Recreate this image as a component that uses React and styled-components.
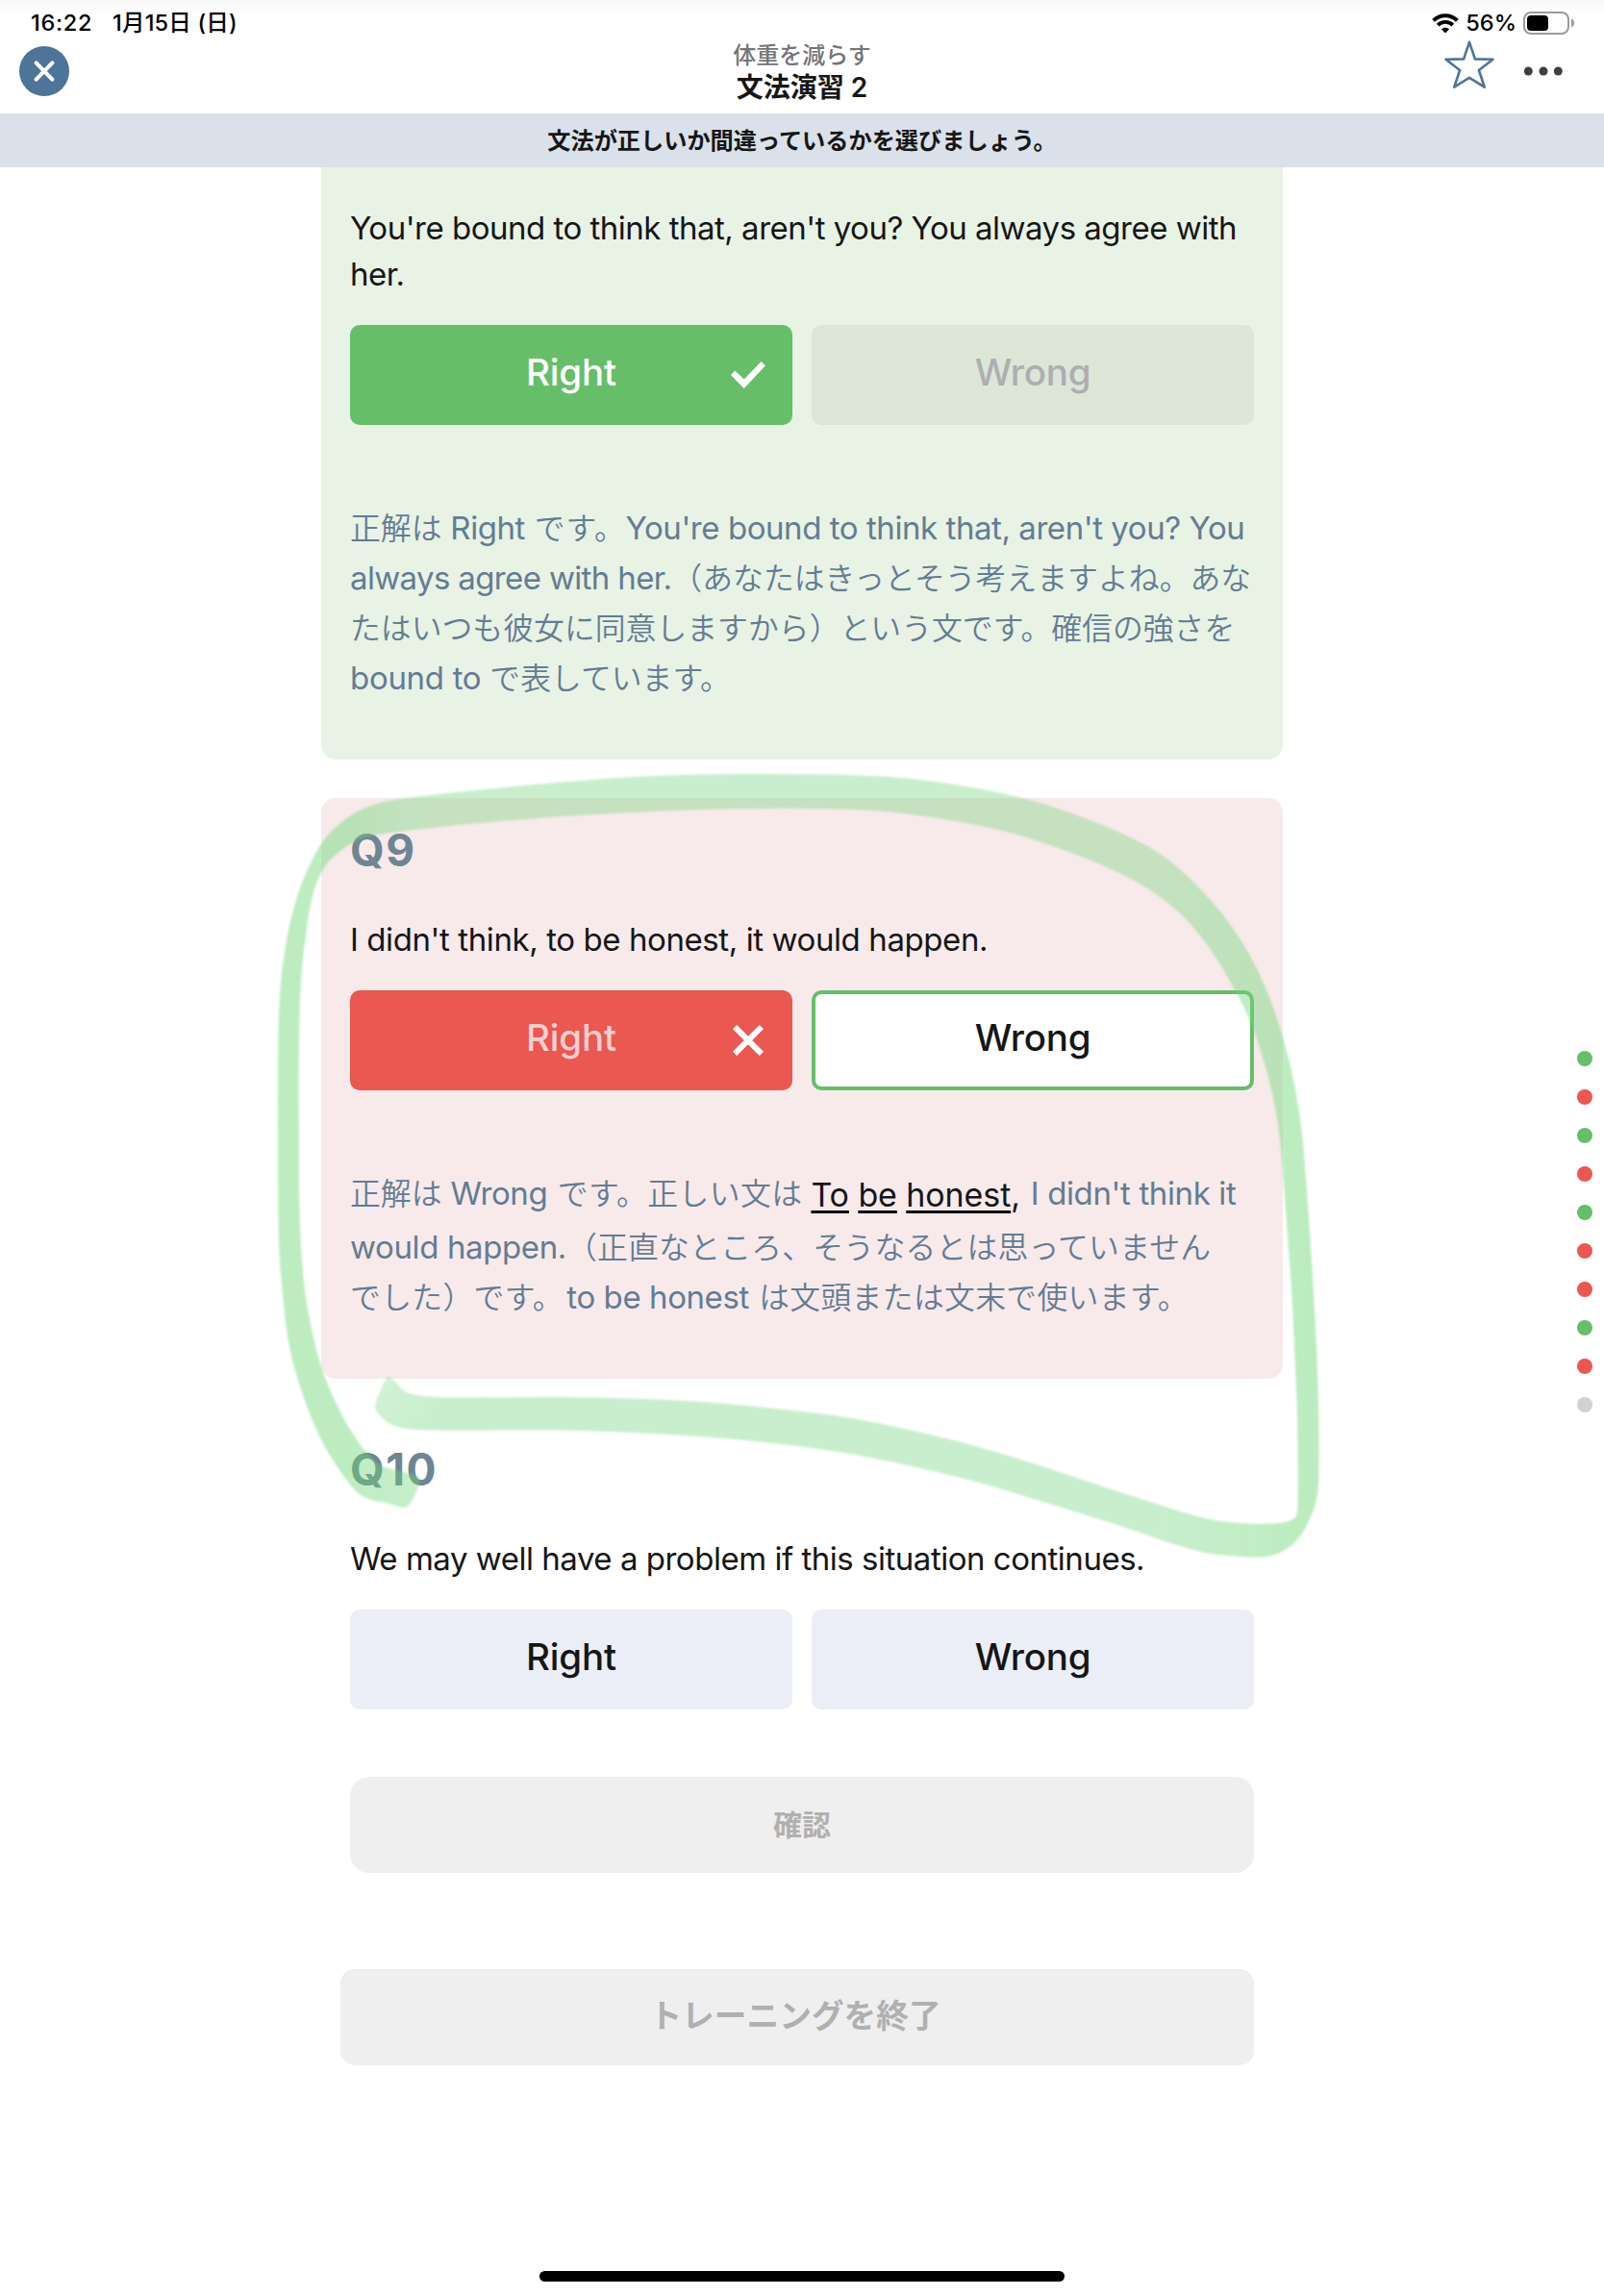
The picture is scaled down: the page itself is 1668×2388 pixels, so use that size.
import React from 'react';
import styled, { createGlobalStyle } from 'styled-components';

const GlobalStyle = createGlobalStyle`
  *, *::before, *::after { box-sizing: border-box; }
  html, body { margin: 0; padding: 0; background: #fff; }
  body { font-family: Inter, 'Noto Sans CJK JP', sans-serif; color: #161616; }
  button { font: inherit; border: 0; padding: 0; margin: 0; }
`;

const Screen = styled.div`
  position: relative;
  display: flex;
  flex-direction: column;
  width: 1668px;
  height: 2388px;
  overflow: hidden;
  background: #fff;
`;

const Header = styled.header`
  height: 118px;
  flex: none;
  background: linear-gradient(#f8f8f8, #fdfdfd 10px, #fff 17px);
`;

const StatusBar = styled.div`
  display: flex;
  align-items: center;
  height: 42px;
  padding: 6px 30px 0 32px;
  font-size: 23.5px;
  font-weight: 500;
  line-height: 30px;
  color: #000;
`;

const Time = styled.span`
  width: 85px;
  letter-spacing: 0.7px;
`;

const DateLabel = styled.span`
  flex: 1;
  letter-spacing: 0.2px;
`;

const StatusIcons = styled.div`
  display: flex;
  align-items: center;
  gap: 7px;
`;

const NavBar = styled.div`
  display: grid;
  grid-template-columns: 1fr auto 1fr;
  height: 76px;
  padding: 0 42px 0 20px;
`;

const CloseButton = styled.button`
  display: flex;
  align-items: center;
  justify-content: center;
  width: 52px;
  height: 52px;
  margin-top: 6px;
  border-radius: 50%;
  background: #4d7499;
`;

const Titles = styled.div`
  display: flex;
  flex-direction: column;
  align-items: center;
  padding: 1px 0 0 22px;
`;

const Subtitle = styled.div`
  height: 30px;
  line-height: 30px;
  font-size: 24px;
  font-weight: 500;
  color: #757578;
`;

const Title = styled.div`
  height: 36px;
  line-height: 37px;
  font-size: 28px;
  font-weight: 600;
`;

const NavActions = styled.div`
  display: flex;
  justify-content: flex-end;
  align-items: flex-start;
  gap: 29px;
`;

const Banner = styled.div`
  flex: none;
  height: 56px;
  padding-top: 1px;
  line-height: 56px;
  text-align: center;
  font-size: 24.2px;
  font-weight: 600;
  background: #dae1ea;
`;

const Content = styled.main`
  display: flex;
  flex-direction: column;
  width: 1000px;
  margin: 0 auto;
  gap: 40px;
`;

const cardColors = { correct: '#e8f3e5', incorrect: '#f8eaeb', open: 'transparent' };

const Card = styled.section`
  padding: ${(p) => (p.$clipped ? '39px' : '26px')} 30px ${(p) => (p.$state === 'open' ? '0' : '59px')};
  border-radius: ${(p) => (p.$clipped ? '0 0 15px 15px' : '15px')};
  background: ${(p) => cardColors[p.$state]};
`;

const Number = styled.h2`
  margin: 0 0 41px;
  height: 56px;
  line-height: 56px;
  font-size: 46px;
  font-weight: 700;
  letter-spacing: 1.5px;
  color: #6f8594;
`;

const Line = styled.div`
  white-space: nowrap;
  letter-spacing: ${(p) => p.$track || 0}px;
`;

const Question = styled.div`
  font-size: 33px;
  line-height: 48px;
`;

const Answers = styled.div`
  display: grid;
  grid-template-columns: 1fr 1fr;
  gap: 20px;
  margin-top: 29px;
`;

const answerStyles = {
  right: { bg: '#67be69', fg: '#ffffff' },
  muted: { bg: '#dce6d6', fg: '#aeaeb2' },
  miss: { bg: '#eb5751', fg: '#f3cfcd' },
  reveal: { bg: '#ffffff', fg: '#161616', ring: '#67be69' },
  idle: { bg: '#ebeef6', fg: '#161616' },
};

const Answer = styled.button`
  display: grid;
  grid-template-columns: 64px 1fr 64px;
  align-items: center;
  height: 104px;
  border-radius: 10px;
  background: ${(p) => answerStyles[p.$kind].bg};
  color: ${(p) => answerStyles[p.$kind].fg};
  box-shadow: ${(p) => (answerStyles[p.$kind].ring ? `inset 0 0 0 4px ${answerStyles[p.$kind].ring}` : 'none')};
  font-size: 38.5px;
  font-weight: 500;
  line-height: 50px;
`;

const AnswerLabel = styled.span`
  grid-column: 2;
  padding-bottom: 6px;
  text-align: center;
  letter-spacing: -0.2px;
`;

const Explanation = styled.div`
  margin-top: 81px;
  font-size: 33px;
  line-height: 52px;
  color: #647c92;
`;

const Ja = styled.span`
  margin-left: ${(p) => p.$gap || 0}px;
  margin-right: ${(p) => p.$after || 0}px;
  font-family: 'Noto Sans CJK JP DemiLight', 'Noto Sans CJK JP', sans-serif;
  font-size: 31.85px;
  font-weight: 350;
  line-height: 1;
  letter-spacing: ${(p) => p.$track || 0}px;
`;

const LeadLine = styled(Line)`
  height: 52px;
  margin-bottom: 4px;
`;

const Fix = styled.span`
  display: inline-block;
  height: 48px;
  margin-right: 2px;
  line-height: 48px;
  vertical-align: -2px;
  font-size: 34px;
  letter-spacing: -0.1px;
  color: #161616;
`;

const Word = styled.u`
  text-decoration-color: #000;
  text-decoration-thickness: 3px;
  text-underline-offset: 3.5px;
  text-decoration-skip-ink: none;
`;

const WideButton = styled.button`
  flex: none;
  height: 100px;
  margin: ${(p) => p.$margin};
  padding: 0 ${(p) => p.$shift || 0}px ${(p) => p.$lift || 0}px 0;
  border-radius: ${(p) => p.$radius}px;
  background: #efefef;
  color: #b0b0b0;
  font-size: ${(p) => p.$size}px;
  font-weight: 600;
`;

const HomeIndicator = styled.div`
  flex: none;
  width: 546px;
  height: 11px;
  margin: auto auto 15px;
  border-radius: 5.5px;
  background: #000;
`;

const ProgressRail = styled.div`
  position: absolute;
  top: 1093px;
  right: 12px;
  display: flex;
  flex-direction: column;
  gap: 24px;
`;

const dotColors = { ok: '#67be69', ng: '#eb5751', none: '#d1d1d1' };

const Dot = styled.span`
  width: 16px;
  height: 16px;
  border-radius: 50%;
  background: ${(p) => dotColors[p.$state]};
`;

const MarkerLayer = styled.svg`
  position: absolute;
  inset: 0;
  pointer-events: none;
`;

const WifiIcon = () => (
  <svg width="28" height="21" viewBox="0 0 28 21" fill="none">
    <path d="M1.6 7.4C8.5 0.6 19.5 0.6 26.4 7.4" stroke="#000" strokeWidth="4" />
    <path d="M6.2 12.1C10.6 7.9 17.4 7.9 21.8 12.1" stroke="#000" strokeWidth="3.8" />
    <path d="M14 20.4L9.9 16.2C12.2 14.1 15.8 14.1 18.1 16.2Z" fill="#000" />
  </svg>
);

const BatteryIcon = () => (
  <svg width="54" height="24" viewBox="0 0 54 24">
    <rect x="1" y="1" width="46" height="22" rx="7" fill="none" stroke="#9b9b9b" strokeWidth="2" />
    <rect x="4" y="4" width="22" height="16" rx="4" fill="#000" />
    <path d="M50 7.5C52 8.3 53 10 53 12S52 15.7 50 16.5Z" fill="#9b9b9b" />
  </svg>
);

const CloseIcon = () => (
  <svg width="24" height="24" viewBox="0 0 24 24">
    <path d="M3.6 3.4L20.4 20.6M20.4 3.4L3.6 20.6" stroke="#fff" strokeWidth="4.2" strokeLinecap="round" />
  </svg>
);

const StarIcon = () => (
  <svg width="54" height="52" viewBox="0 0 54 52">
    <path
      d="M27 1.8L32.9 19.4L51.5 19.8L36.9 31L42.8 48.6L27 38.8L11.2 48.6L17.1 31L2.5 19.8L21.1 19.4Z"
      fill="none"
      stroke="#4d7499"
      strokeWidth="2.6"
      strokeLinejoin="round"
    />
  </svg>
);

const MoreIcon = () => (
  <svg width="42" height="68" viewBox="0 0 42 68">
    {[5.3, 21, 36.3].map((x) => (
      <circle key={x} cx={x} cy="32" r="4.5" fill="#3f3f40" />
    ))}
  </svg>
);

const CheckIcon = () => (
  <svg width="36" height="28" viewBox="0 0 36 28">
    <path d="M0 14L4.4 9.6L13.7 18.4L31.6 0L36 4.3L13.7 28Z" fill="#fff" />
  </svg>
);

const CrossIcon = () => (
  <svg width="36" height="32" viewBox="0 0 36 32">
    <path d="M6.2 4.2L29.8 27.8M29.8 4.2L6.2 27.8" stroke="#fff" strokeWidth="6" strokeLinecap="square" />
  </svg>
);

// Outline of the hand-drawn highlighter loop, walked once around both edges.
const loop = [
  [405, 1432], [412, 1438], [421, 1447], [433.6, 1451], [458.6, 1453.3], [601, 1453.3], [726, 1457.7], [840, 1468.7],
  [890, 1475.7], [968, 1492.3], [1038, 1510.7], [1116, 1535.7], [1190, 1560], [1238, 1575], [1267.7, 1582], [1301, 1584.7],
  [1330.5, 1584], [1346, 1579], [1349.4, 1568], [1349, 1473], [1347, 1423], [1343.5, 1350], [1338, 1273], [1334.2, 1223],
  [1331.5, 1190], [1325, 1146.7], [1314, 1103], [1301, 1065], [1287, 1035], [1267, 1000], [1249, 974.5], [1227, 950],
  [1201, 929], [1173.3, 912.7], [1134.5, 895], [1086.4, 877.3], [1038, 863], [968, 850], [912, 843.3], [857, 841.3],
  [820, 840.7], [744, 841.7], [637, 846], [530, 853.3], [423, 864], [383.6, 870], [365.7, 877.3], [347.9, 890],
  [335.4, 905], [324.6, 933.3], [317.5, 976.7], [312.9, 1023], [311, 1090], [311, 1190], [311.5, 1256], [315, 1323],
  [321, 1366.7], [333.6, 1420], [351.4, 1463.3], [369.3, 1495], [383.6, 1513], [396, 1524], [415.7, 1530], [434, 1535],
  [437, 1538], [433.6, 1550], [427, 1563], [421, 1568], [405, 1564], [383, 1559], [369.3, 1550], [351.4, 1526.7],
  [333.6, 1496.7], [315.7, 1453.3], [301.4, 1403], [293.6, 1343], [290, 1290], [289, 1190], [289, 1123], [290, 1056.7],
  [293.6, 1006.7], [303.2, 953.3], [315.7, 914], [333.6, 878.3], [351.4, 858.3], [372.9, 843.3], [398, 834.5], [430, 829],
  [494, 822], [583.6, 813.5], [673, 807.3], [762, 805], [840, 805.3], [912, 807.3], [975, 813.3], [1049, 826.5],
  [1116, 846.5], [1182, 874], [1221, 899], [1264, 942], [1293.6, 983.3], [1315.7, 1026.7], [1332.4, 1073], [1345, 1123],
  [1353.5, 1175], [1358.3, 1230], [1362, 1280], [1365.7, 1340], [1369.4, 1406.7], [1371.3, 1473], [1371.3, 1536.7], [1369, 1560],
  [1362, 1580], [1352.7, 1596.7], [1339.8, 1610], [1319.5, 1618.5], [1289.8, 1619], [1256.5, 1615.5], [1223, 1606.7], [1153, 1583.3],
  [1079, 1560.3], [1027, 1544.5], [968, 1529.5], [894, 1514], [820, 1503], [726, 1494], [601, 1488], [458.6, 1487.7],
  [423, 1486], [405, 1480.7], [396, 1473.3], [390, 1463], [395, 1448], [402, 1433],
];

const smoothPath = (pts) => {
  const n = pts.length;
  const at = (i) => pts[(i + n) % n];
  let d = `M${pts[0].join(' ')}`;
  for (let i = 0; i < n; i += 1) {
    const [a, b, c, e] = [at(i - 1), at(i), at(i + 1), at(i + 2)];
    const span = Math.hypot(c[0] - b[0], c[1] - b[1]);
    const before = Math.hypot(b[0] - a[0], b[1] - a[1]);
    const after = Math.hypot(e[0] - c[0], e[1] - c[1]);
    const k1 = span / (3 * (before + span));
    const k2 = span / (3 * (after + span));
    d += `C${b[0] + (c[0] - a[0]) * k1} ${b[1] + (c[1] - a[1]) * k1} ${c[0] - (e[0] - b[0]) * k2} ${c[1] - (e[1] - b[1]) * k2} ${c[0]} ${c[1]}`;
  }
  return `${d}Z`;
};

const loopPath = smoothPath(loop);

const Marker = () => (
  <MarkerLayer width="1668" height="2388" viewBox="0 0 1668 2388">
    <defs>
      <linearGradient id="ink" gradientUnits="userSpaceOnUse" x1="288" y1="0" x2="1372" y2="0">
        <stop offset="0" stopColor="#6fd678" stopOpacity="0.46" />
        <stop offset="0.06" stopColor="#6fd678" stopOpacity="0.46" />
        <stop offset="0.14" stopColor="#71d47c" stopOpacity="0.38" />
        <stop offset="0.85" stopColor="#71d47c" stopOpacity="0.38" />
        <stop offset="0.97" stopColor="#6fd678" stopOpacity="0.45" />
        <stop offset="1" stopColor="#6fd678" stopOpacity="0.47" />
      </linearGradient>
      <linearGradient id="start" gradientUnits="userSpaceOnUse" x1="392" y1="1440" x2="450" y2="1470">
        <stop offset="0" stopColor="#bbb" />
        <stop offset="1" stopColor="#fff" />
      </linearGradient>
      <mask id="pressure" maskUnits="userSpaceOnUse" x="0" y="0" width="1668" height="2388">
        <rect width="1668" height="2388" fill="#fff" />
        <rect x="384" y="1425" width="90" height="68" fill="url(#start)" />
      </mask>
      <filter id="edge" x="-2%" y="-2%" width="104%" height="104%">
        <feGaussianBlur stdDeviation="0.9" />
      </filter>
    </defs>
    <g mask="url(#pressure)">
      <path d={loopPath} fill="url(#ink)" filter="url(#edge)" />
    </g>
  </MarkerLayer>
);

const AnswerPair = ({ right, wrong, icon }) => (
  <Answers>
    <Answer $kind={right}>
      <AnswerLabel>Right</AnswerLabel>
      {icon}
    </Answer>
    <Answer $kind={wrong}>
      <AnswerLabel>Wrong</AnswerLabel>
    </Answer>
  </Answers>
);

const progress = ['ok', 'ng', 'ok', 'ng', 'ok', 'ng', 'ng', 'ok', 'ng', 'none'];

export default function App() {
  return (
    <>
      <GlobalStyle />
      <Screen lang="ja">
        <Header>
          <StatusBar>
            <Time>16:22</Time>
            <DateLabel>1月15日 (日)</DateLabel>
            <StatusIcons>
              <WifiIcon />
              <span>56%</span>
              <BatteryIcon />
            </StatusIcons>
          </StatusBar>
          <NavBar>
            <CloseButton aria-label="閉じる">
              <CloseIcon />
            </CloseButton>
            <Titles>
              <Subtitle>体重を減らす</Subtitle>
              <Title>文法演習 2</Title>
            </Titles>
            <NavActions>
              <StarIcon />
              <MoreIcon />
            </NavActions>
          </NavBar>
        </Header>
        <Banner>文法が正しいか間違っているかを選びましょう。</Banner>

        <Content>
          <Card $state="correct" $clipped>
            <Question>
              <Line $track={-0.5}>You're bound to think that, aren't you? You always agree with</Line>
              <Line $track={-0.5}>her.</Line>
            </Question>
            <AnswerPair right="right" wrong="muted" icon={<CheckIcon />} />
            <Explanation>
              <Line $track={-0.44}>
                <Ja>正解は</Ja> Right <Ja $gap={1} $track={0.8}>です。</Ja>You're bound to think that, aren't you? You
              </Line>
              <Line $track={-0.64}>
                always agree with her.<Ja>（あなたはきっとそう考えますよね。あな</Ja>
              </Line>
              <Line>
                <Ja>たはいつも彼女に同意しますから）という文です。確信の強さを</Ja>
              </Line>
              <Line $track={-0.3}>
                bound to <Ja>で表しています。</Ja>
              </Line>
            </Explanation>
          </Card>

          <Card $state="incorrect">
            <Number>Q9</Number>
            <Question>
              <Line $track={-0.41}>I didn't think, to be honest, it would happen.</Line>
            </Question>
            <AnswerPair right="miss" wrong="reveal" icon={<CrossIcon />} />
            <Explanation>
              <LeadLine $track={-0.38}>
                <Ja>正解は</Ja> Wrong <Ja $gap={1.5} $track={0.4}>です。正しい文は</Ja>{' '}
                <Fix>
                  <Word>To</Word> <Word>be</Word> <Word>honest</Word>,
                </Fix>{' '}
                I didn't think it
              </LeadLine>
              <Line $track={-0.38}>
                would happen.<Ja $track={0.2}>（正直なところ、そうなるとは思っていません</Ja>
              </Line>
              <Line $track={-0.42}>
                <Ja $track={0.3} $after={3.5}>でした）です。</Ja>to be honest <Ja $gap={1.5} $track={0.3}>は文頭または文末で使います。</Ja>
              </Line>
            </Explanation>
          </Card>

          <Card $state="open">
            <Number>Q10</Number>
            <Question>
              <Line $track={-0.48}>We may well have a problem if this situation continues.</Line>
            </Question>
            <AnswerPair right="idle" wrong="idle" />
          </Card>
        </Content>

        <WideButton $margin="70px 364px 0" $radius={20} $size={30} $lift={5}>
          確認
        </WideButton>
        <WideButton $margin="100px 364px 0 354px" $radius={15} $size={33.7} $lift={8} $shift={4}>
          トレーニングを終了
        </WideButton>
        <HomeIndicator />

        <ProgressRail>
          {progress.map((state, i) => (
            <Dot key={i} $state={state} />
          ))}
        </ProgressRail>
        <Marker />
      </Screen>
    </>
  );
}
